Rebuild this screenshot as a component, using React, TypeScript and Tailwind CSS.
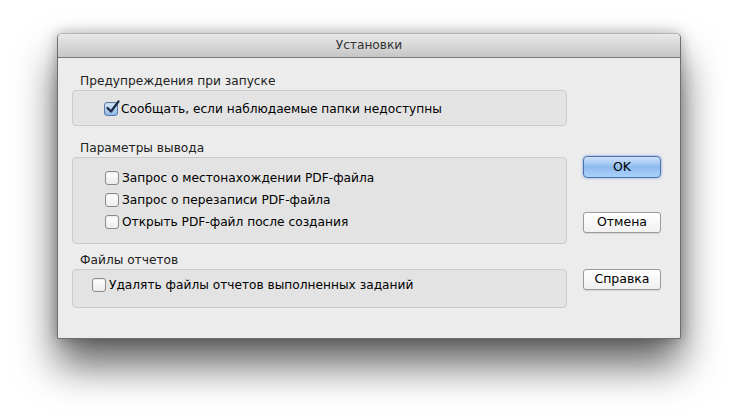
import React from 'react';

const font = { fontFamily: '"DejaVu Sans", "Liberation Sans", sans-serif' };

const Check = ({ checked = false }: { checked?: boolean }) => (
  <span
    className={`relative inline-block w-[14px] h-[14px] shrink-0 rounded-[3px] border shadow-[inset_0_1px_1px_rgba(0,0,0,0.08)] ${
      checked ? 'border-[#5a7aa8] bg-gradient-to-b from-[#d8e8fa] to-[#8fb6e6]' : 'border-[#8a8a8a] bg-gradient-to-b from-white to-[#ececec]'
    }`}
  >
    {checked && (
      <svg className="absolute left-[0px] top-[-3px]" width="15" height="15" viewBox="0 0 15 15">
        <path d="M2.5 8 L6 11.5 L13.5 1.5" fill="none" stroke="#1c2a44" strokeWidth="2.2" strokeLinecap="round" strokeLinejoin="round" />
      </svg>
    )}
  </span>
);

const Row = ({ label, checked }: { label: string; checked?: boolean }) => (
  <div className="flex items-center gap-[3px] h-[20px] text-[12.2px] text-black">
    <Check checked={checked} />
    <span>{label}</span>
  </div>
);

const Button = ({ label, primary }: { label: string; primary?: boolean }) =>
  primary ? (
    <button className="w-[78px] h-[22px] rounded-[4px] border border-[#4a72b0] bg-gradient-to-b from-[#cfe3fb] via-[#8fbbef] to-[#a9d1fa] shadow-[0_0_3px_rgba(70,130,220,0.7)] text-[12.5px] text-black leading-none">
      {label}
    </button>
  ) : (
    <button className="w-[78px] h-[21px] rounded-[3px] border border-[#9a9a9a] bg-gradient-to-b from-white to-[#f0f0f0] shadow-[0_1px_1px_rgba(0,0,0,0.1)] text-[12.5px] text-black leading-none">
      {label}
    </button>
  );

const Group = ({ title, children, className }: { title: string; children: React.ReactNode; className: string }) => (
  <div>
    <div className="text-[12.2px] text-[#222] h-[17px] leading-[17px] pl-[8px]">{title}</div>
    <div className={`rounded-[4px] border border-[#cbcbcb] bg-[#e3e3e3] ${className}`}>{children}</div>
  </div>
);

export default function App() {
  return (
    <div className="w-[738px] h-[418px] bg-white pt-[33px] pl-[57px] overflow-hidden" style={font}>
      <div className="w-[624px] h-[306px] rounded-t-[5px] rounded-b-[2px] bg-[#ececec] border border-[#6e6e6e] border-t-[#b5b5b5] shadow-[0_26px_40px_rgba(0,0,0,0.62),0_0_14px_rgba(0,0,0,0.28)] overflow-hidden flex flex-col">
        <div className="h-[24px] shrink-0 bg-gradient-to-b from-[#e8e8e8] to-[#c6c6c6] border-b border-[#7a7a7a] flex items-center justify-center text-[12.2px] text-[#333]">
          Установки
        </div>
        <div className="flex pl-[14px] pt-[15px]">
          <div className="w-[495px] flex flex-col">
            <Group title="Предупреждения при запуске" className="h-[36px] pl-[31px] pt-[8px]">
              <Row label="Сообщать, если наблюдаемые папки недоступны" checked />
            </Group>
            <div className="h-[14px]" />
            <Group title="Параметры вывода" className="h-[87px] pl-[32px] pt-[10px] flex flex-col gap-[2px]">
              <Row label="Запрос о местонахождении PDF-файла" />
              <Row label="Запрос о перезаписи PDF-файла" />
              <Row label="Открыть PDF-файл после создания" />
            </Group>
            <div className="h-[8px]" />
            <Group title="Файлы отчетов" className="h-[39px] pl-[19px] pt-[5px]">
              <Row label="Удалять файлы отчетов выполненных заданий" />
            </Group>
          </div>
          <div className="flex flex-col pl-[16px] pt-[83px]">
            <Button label="OK" primary />
            <div className="h-[34px]" />
            <Button label="Отмена" />
            <div className="h-[36px]" />
            <Button label="Справка" />
          </div>
        </div>
      </div>
    </div>
  );
}
